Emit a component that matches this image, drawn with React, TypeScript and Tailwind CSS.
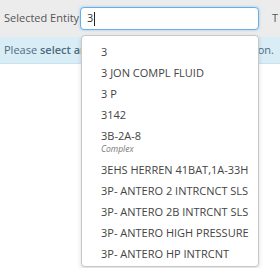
import { memo } from 'react'

interface EntityOption {
  label: string
  kind?: string
}

const options: EntityOption[] = [
  { label: '3' },
  { label: '3 JON COMPL FLUID' },
  { label: '3 P' },
  { label: '3142' },
  { label: '3B-2A-8', kind: 'Complex' },
  { label: '3EHS HERREN 41BAT,1A-33H' },
  { label: '3P- ANTERO 2 INTRCNCT SLS' },
  { label: '3P- ANTERO 2B INTRCNT SLS' },
  { label: '3P- ANTERO HIGH PRESSURE' },
  { label: '3P- ANTERO HP INTRCNT' },
]

const EntityPicker = memo(() => {
  return (
    <div
      className="relative w-[280px] h-[268px] overflow-hidden bg-white text-[11px] text-[#444]"
      style={{ fontFamily: '"Open Sans", "Noto Sans", sans-serif' }}
    >
      {/* Toolbar */}
      <div className="flex h-[37px] items-center bg-[#ececec] pl-[4px]">
        <span className="w-[76px] shrink-0 whitespace-nowrap text-[#555]">Selected Entity</span>
        <div className="flex h-[23px] w-[179px] shrink-0 items-center rounded-[4px] border border-[#66afe9] bg-white pl-[6px] shadow-[0_0_3px_rgba(102,175,233,0.6)]">
          <span className="text-[#333]">3</span>
          <span className="ml-[1px] h-[14px] w-px bg-[#222]" />
        </div>
        <span className="ml-[13px] text-[#555]">T</span>
      </div>

      {/* Info message, middle part sits under the open dropdown */}
      <div className="flex h-[27px] items-center whitespace-nowrap border-b border-[#c9e3ef] bg-[#d9edf7] px-[4px] text-[#4f6b7d]">
        <span className="w-[77px] overflow-hidden">
          Please <b className="font-semibold">select an</b>
        </span>
        <span className="ml-auto pr-[2px]">on.</span>
      </div>

      {/* Dropdown */}
      <ul className="absolute left-[81px] top-[35px] w-[178px] h-[232px] overflow-hidden rounded-[4px] border border-[#c8c8c8] bg-white pt-[5px] shadow-[0_2px_4px_rgba(0,0,0,0.15)]">
        {options.map(o => (
          <li key={o.label} className="pl-[19px] whitespace-nowrap text-[#444]">
            <div className="h-[21px] leading-[21px]">{o.label}</div>
            {o.kind && (
              <div className="-mt-[3px] h-[16px] text-[8.5px] italic leading-[12px] text-[#777]">
                {o.kind}
              </div>
            )}
          </li>
        ))}
      </ul>
    </div>
  )
})

EntityPicker.displayName = 'EntityPicker'

export default function App() {
  return <EntityPicker />
}
